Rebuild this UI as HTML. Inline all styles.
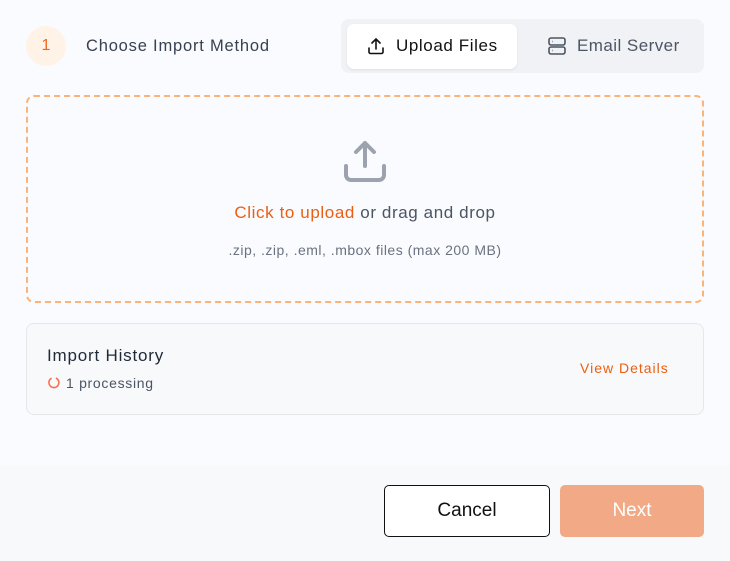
<!DOCTYPE html>
<html><head><style>
*{box-sizing:border-box;margin:0;padding:0}
body{width:730px;height:561px;background:#fafbfe;font-family:"Liberation Sans",sans-serif;position:relative;overflow:hidden}
.abs{position:absolute}
</style></head><body>
<div class="abs" style="left:26px;top:26px;width:40px;height:40px;border-radius:50%;background:#fff3e8;color:#ea6a1e;font-size:16px;text-align:center;line-height:40px">1</div>
<div class="abs" style="left:86px;top:37px;font-size:16.5px;letter-spacing:.8px;color:#374151">Choose Import Method</div>
<div class="abs" style="left:341px;top:19px;width:363px;height:54px;border-radius:8px;background:#f1f2f5"></div>
<div class="abs" style="left:347px;top:24px;width:170px;height:45px;border-radius:7px;background:#fff;box-shadow:0 1px 2px rgba(0,0,0,.08)"></div>
<svg class="abs" style="left:366px;top:36px" width="20" height="20" viewBox="0 0 20 20" fill="none" stroke="#111" stroke-width="1.6" stroke-linecap="round" stroke-linejoin="round"><path d="M10 13V3M6 7l4-4 4 4M3 12v4a1.5 1.5 0 0 0 1.5 1.5h11A1.5 1.5 0 0 0 17 16v-4"/></svg>
<div class="abs" style="left:396px;top:36px;font-size:17px;letter-spacing:.6px;color:#111">Upload Files</div>
<svg class="abs" style="left:547px;top:36px" width="20" height="20" viewBox="0 0 20 20" fill="none" stroke="#4b5563" stroke-width="1.6"><rect x="2" y="2" width="16" height="7" rx="2"/><rect x="2" y="11" width="16" height="7" rx="2"/><path d="M5 5.5h.5M5 14.5h.5"/></svg>
<div class="abs" style="left:577px;top:36px;font-size:17px;letter-spacing:.45px;color:#4b5563">Email Server</div>
<div class="abs" style="left:26px;top:95px;width:678px;height:208px;border:2px dashed #fbb377;border-radius:8px"></div>
<svg class="abs" style="left:343px;top:139px" width="44" height="44" viewBox="0 0 44 44" fill="none" stroke="#9ca3af" stroke-width="4" stroke-linecap="round" stroke-linejoin="round"><path d="M22 27V4M13 13l9-9 9 9M3 27v9a5 5 0 0 0 5 5h28a5 5 0 0 0 5-5v-9"/></svg>
<div class="abs" style="left:0;width:730px;top:203px;text-align:center;font-size:17px;letter-spacing:.6px;color:#4b5563"><span style="color:#ea5f12">Click to upload</span> or drag and drop</div>
<div class="abs" style="left:0;width:730px;top:242px;text-align:center;font-size:14px;letter-spacing:.5px;color:#6b7280">.zip, .zip, .eml, .mbox files (max 200 MB)</div>
<div class="abs" style="left:26px;top:323px;width:678px;height:92px;border:1px solid #e5e7eb;border-radius:8px;background:#f8f9fb"></div>
<div class="abs" style="left:47px;top:346px;font-size:17px;letter-spacing:.8px;color:#1f2937">Import History</div>
<svg class="abs" style="left:47px;top:376px" width="14" height="14" viewBox="0 0 14 14" fill="none" stroke="#f87152" stroke-width="1.6" stroke-linecap="round"><path d="M9.5 2.3A5 5 0 1 1 4 2.5"/></svg>
<div class="abs" style="left:66px;top:375px;font-size:14px;letter-spacing:.7px;color:#4b5563">1 processing</div>
<div class="abs" style="left:580px;top:360px;font-size:14px;letter-spacing:1px;color:#ea5f12">View Details</div>
<div class="abs" style="left:0;top:466px;width:730px;height:95px;background:#f8f9fb"></div>
<div class="abs" style="left:384px;top:485px;width:166px;height:52px;border:1px solid #111;border-radius:5px;background:#fff;font-size:19px;color:#111;text-align:center;line-height:50px">Cancel</div>
<div class="abs" style="left:560px;top:485px;width:144px;height:52px;border-radius:5px;background:#f2a985;font-size:19px;color:#fff;text-align:center;line-height:52px">Next</div>
</body></html>
